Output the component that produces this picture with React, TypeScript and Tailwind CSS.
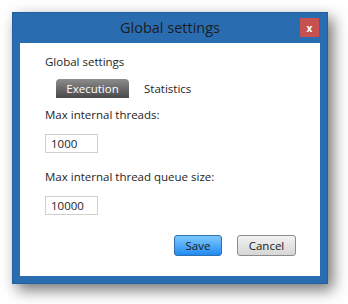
import React from "react";

export default function App() {
  const font = { fontFamily: '"Open Sans", "Noto Sans", sans-serif' };
  return (
    <div className="w-[348px] h-[304px] bg-white pt-[12px] pl-[12px]" style={font}>
      <div className="relative w-[316px] h-[272px] bg-[#2a6cb0] border border-[#235f9e] shadow-[5px_6px_14px_rgba(0,0,0,0.55)] flex flex-col">
        <div className="h-[30px] flex items-center justify-center text-[14.5px] text-[#1d1d1d]">
          Global settings
        </div>
        <div className="absolute left-[287px] top-[5px] w-[19px] h-[19px] bg-[#c75050] flex items-center justify-center text-white text-[10px] font-bold leading-none">
          x
        </div>
        <div className="mx-[7px] w-[300px] h-[233px] bg-white flex flex-col pl-[25px] text-[11.5px] text-[#1e1e1e]">
          <div className="mt-[11px] leading-[16px]">Global settings</div>
          <div className="mt-[9px] flex items-center h-[19px] ml-[11px]">
            <div className="w-[73px] h-[19px] rounded-t-[4px] bg-gradient-to-b from-[#8c8c8c] to-[#4a4a4a] text-white flex items-center justify-center leading-none">
              Execution
            </div>
            <div className="ml-[15px] leading-none">Statistics</div>
          </div>
          <div className="mt-[9px] leading-[16px]">Max internal threads:</div>
          <div className="mt-[11px] w-[53px] h-[19px] border border-[#cfcfcf] flex items-center pl-[5px] leading-none">
            1000
          </div>
          <div className="mt-[16px] leading-[16px]">Max internal thread queue size:</div>
          <div className="mt-[11px] w-[53px] h-[19px] border border-[#cfcfcf] flex items-center pl-[5px] leading-none">
            10000
          </div>
          <div className="mt-[20px] flex justify-end pr-[24px] gap-[15px]">
            <div className="w-[48px] h-[21px] rounded-[3px] border border-[#2f6fae] bg-gradient-to-b from-[#7cc8ff] to-[#1b8cf2] flex items-center justify-center leading-none text-[#1a1a1a]">
              Save
            </div>
            <div className="w-[59px] h-[21px] rounded-[3px] border border-[#8c8c8c] bg-gradient-to-b from-[#f2f2f2] to-[#d6d6d6] flex items-center justify-center leading-none text-[#1a1a1a]">
              Cancel
            </div>
          </div>
        </div>
      </div>
    </div>
  );
}
